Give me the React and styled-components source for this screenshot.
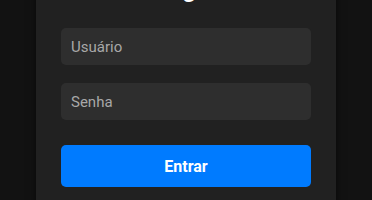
import React from "react";
import styled, { createGlobalStyle } from "styled-components";

const Global = createGlobalStyle`
  html, body { margin: 0; padding: 0; background: #121212; }
  body { font-family: Roboto, "Noto Sans", Arial, sans-serif; overflow: hidden; }
`;

const Page = styled.div`
  display: flex;
  justify-content: center;
  align-items: flex-start;
  height: 200px;
  overflow: hidden;
`;

const Card = styled.form`
  width: 250px;
  margin-top: -50px;
  padding: 25px;
  background: #212121;
  display: flex;
  flex-direction: column;
  box-shadow: 0 0 8px rgba(0, 0, 0, 0.5);
`;

const Title = styled.h2`
  margin: 0 0 25px;
  text-align: center;
  color: #ffffff;
  font-size: 24px;
  font-weight: 700;
  line-height: 28px;
`;

const Input = styled.input`
  box-sizing: border-box;
  width: 100%;
  height: 37px;
  margin-bottom: ${(p) => p.$gap}px;
  padding: 0 10px;
  border: none;
  border-radius: 5px;
  background: #2e2e2e;
  color: #eee;
  font-family: inherit;
  font-size: 15px;
  outline: none;
  &::placeholder { color: #a8a8a8; }
`;

const Button = styled.button`
  height: 42px;
  border: none;
  border-radius: 5px;
  background: #007bff;
  color: #fff;
  font-family: inherit;
  font-size: 16px;
  font-weight: 700;
  cursor: pointer;
`;

export default function App() {
  return (
    <>
      <Global />
      <Page>
        <Card onSubmit={(e) => e.preventDefault()}>
          <Title>Login</Title>
          <Input $gap={18} placeholder="Usuário" />
          <Input $gap={25} type="password" placeholder="Senha" />
          <Button type="submit">Entrar</Button>
        </Card>
      </Page>
    </>
  );
}
